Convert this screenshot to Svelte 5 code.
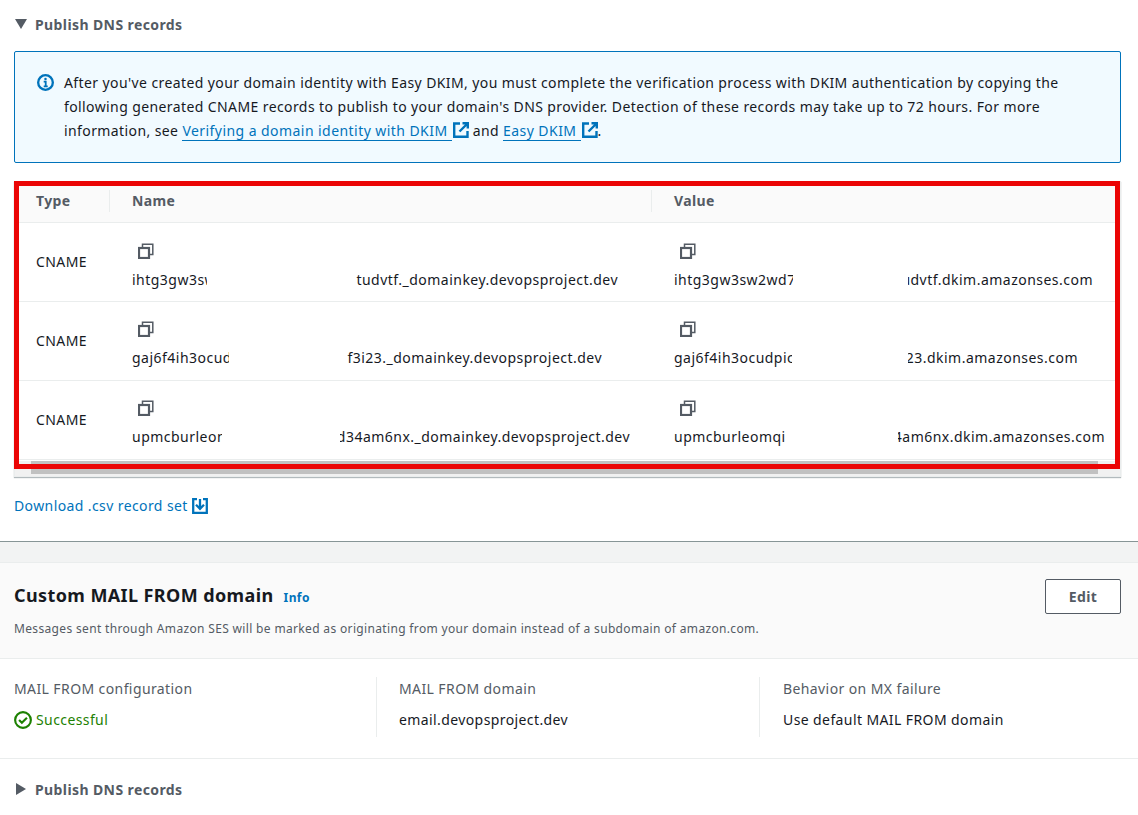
<script>
  // [start text, start clip, blanked gap, end text, end clip]
  const rows = [
    {
      name: ["ihtg3gw3sw2wd7", 75, 149, "tudvtf._domainkey.devopsproject.dev", 262],
      value: ["ihtg3gw3sw2wd7", 119, 115, "tudvtf.dkim.amazonses.com", 185],
    },
    {
      name: ["gaj6f4ih3ocudpic", 97, 118, "f3i23._domainkey.devopsproject.dev", 255],
      value: ["gaj6f4ih3ocudpic", 118, 116, "f3i23.dkim.amazonses.com", 170],
    },
    {
      name: ["upmcburleomqi", 90, 118, "d34am6nx._domainkey.devopsproject.dev", 290],
      value: ["upmcburleomqi", 112, 112, "d34am6nx.dkim.amazonses.com", 207],
    },
  ];

  const details = [
    { label: "MAIL FROM domain", text: "email.devopsproject.dev" },
    { label: "Behavior on MX failure", text: "Use default MAIL FROM domain" },
  ];
</script>

{#snippet copyIcon()}
  <svg class="copy" viewBox="0 0 16 16" width="16" height="16" fill="none" stroke="#545b64">
    <rect x="1" y="5" width="10" height="10" stroke-width="2.2" />
    <path d="M4.5 4V1.2h10.3v10.3H12" stroke-width="1.5" />
  </svg>
{/snippet}

{#snippet extIcon()}
  <svg class="ext" viewBox="0 0 16 16" width="16" height="16" fill="none" stroke="#0073bb" stroke-width="2.4">
    <path d="M7 1.5H1.2v13.3h13.3V9" />
    <path d="M9.5 1.2h5.3v5.3M14.5 1.5L6.5 9.5" />
  </svg>
{/snippet}

{#snippet redacted(parts)}
  <div class="redacted">
    <span class="clip" style="width:{parts[1]}px">{parts[0]}</span>
    <span class="gap" style="width:{parts[2]}px"></span>
    <span class="clip tail" style="width:{parts[4]}px"><span>{parts[3]}</span></span>
  </div>
{/snippet}

<div class="page">
  <section class="publish">
    <div class="expander">
      <svg viewBox="0 0 12 10" width="12" height="10"><path d="M0 0h12L6 10z" fill="#545b64" /></svg>
      <span>Publish DNS records</span>
    </div>

    <div class="alert">
      <svg class="info" viewBox="0 0 16 16" width="17" height="17" fill="none">
        <circle cx="8" cy="8" r="6.9" stroke="#0073bb" stroke-width="2.2" />
        <path d="M6.3 7.2H8.2v4M6.3 11.6h3.8" stroke="#0073bb" stroke-width="1.7" />
        <circle cx="8" cy="4.7" r="1.2" fill="#0073bb" />
      </svg>
      <p>
        After you've created your domain identity with Easy DKIM, you must complete the verification process with DKIM authentication by copying the following generated CNAME records to publish to your domain's DNS provider. Detection of these records may take up to 72 hours. For more information, see <a href="#verify">Verifying a domain identity with DKIM&nbsp;</a>{@render extIcon()} and <a href="#dkim">Easy DKIM&nbsp;</a>{@render extIcon()}.
      </p>
    </div>

    <div class="table-box">
      <div class="table-head">
        <div class="th type">Type</div>
        <div class="th name">Name</div>
        <div class="th">Value</div>
      </div>
      {#each rows as row}
        <div class="row">
          <div class="cell-type">CNAME</div>
          <div class="cell-name">
            {@render copyIcon()}
            {@render redacted(row.name)}
          </div>
          <div class="cell-value">
            {@render copyIcon()}
            {@render redacted(row.value)}
          </div>
        </div>
      {/each}
      <div class="scrollbar"><div class="thumb"></div></div>
      <div class="highlight"></div>
    </div>

    <a class="download" href="#csv">
      Download .csv record set
      <svg viewBox="0 0 16 16" width="16" height="16" fill="none" stroke="#0073bb" stroke-width="2.3">
        <path d="M5 1.2H1.2v13.6h13.6V1.2H11" />
        <path d="M8 1v9.5M4 6.8L8 10.8l4-4" />
      </svg>
    </a>
  </section>

  <div class="band"></div>

  <section class="card">
    <header class="card-head">
      <div class="card-text">
        <div class="title-line">
          <h2>Custom MAIL FROM domain</h2>
          <a class="info-link" href="#info">Info</a>
        </div>
        <p>Messages sent through Amazon SES will be marked as originating from your domain instead of a subdomain of amazon.com.</p>
      </div>
      <button>Edit</button>
    </header>

    <div class="columns">
      <div class="col">
        <div class="label">MAIL FROM configuration</div>
        <div class="status">
          <svg viewBox="0 0 16 16" width="18" height="18" fill="none" stroke="#1d8102" stroke-width="1.9">
            <circle cx="8" cy="8" r="7" />
            <path d="M4.5 8l2.5 2.5 4.5-4.5" />
          </svg>
          Successful
        </div>
      </div>
      {#each details as item}
        <div class="col">
          <div class="label">{item.label}</div>
          <div class="value">{item.text}</div>
        </div>
      {/each}
    </div>

    <div class="expander closed">
      <svg viewBox="0 0 10 12" width="10" height="12"><path d="M0 0l10 6-10 6z" fill="#545b64" /></svg>
      <span>Publish DNS records</span>
    </div>
  </section>
</div>

<style>
  :global(body) {
    margin: 0;
    background: #fff;
  }

  .page {
    width: 1138px;
    height: 815px;
    overflow: hidden;
    font-family: "Noto Sans", "Open Sans", sans-serif;
    font-size: 14px;
    letter-spacing: 0.4px;
    color: #16191f;
  }

  .publish {
    height: 541px;
    padding: 0 17px 0 14px;
    box-sizing: border-box;
  }

  .expander {
    display: flex;
    align-items: center;
    gap: 8px;
    height: 51px;
    padding-bottom: 3px;
    box-sizing: border-box;
    font-weight: 700;
    color: #545b64;
  }

  .expander svg {
    margin-left: 1px;
  }

  .alert {
    display: flex;
    gap: 10px;
    height: 112px;
    box-sizing: border-box;
    padding: 19px 20px 0 22px;
    background: #f1faff;
    border: 1px solid #0073bb;
    border-radius: 2px;
  }

  .alert .info {
    flex: none;
    margin-top: 3px;
  }

  .alert p {
    margin: 0;
    line-height: 24px;
  }

  .alert a {
    color: #0073bb;
    text-decoration: none;
    border-bottom: 1px solid #0073bb;
    letter-spacing: 0.44px;
  }

  .ext {
    vertical-align: -2px;
    margin: 0 0 0 1px;
  }

  .table-box {
    position: relative;
    margin-top: 18px;
    height: 296px;
    border: 1px solid #eaeded;
    box-shadow: 0 1px 1px rgba(0, 28, 36, 0.3);
    box-sizing: border-box;
  }

  .table-head {
    display: flex;
    align-items: center;
    height: 38px;
    padding-bottom: 2px;
    background: #fafafa;
    border-bottom: 1px solid #eaeded;
    color: #545b64;
    font-weight: 700;
  }

  .th {
    padding-left: 22px;
    line-height: 22px;
  }

  .th.type {
    width: 95px;
    padding-left: 21px;
    box-sizing: border-box;
    border-right: 1px solid #eaeded;
  }

  .th.name {
    width: 542px;
    box-sizing: border-box;
    border-right: 1px solid #eaeded;
  }

  .row {
    display: flex;
    height: 78px;
    border-bottom: 1px solid #eaeded;
  }

  .cell-type {
    width: 117px;
    padding-left: 21px;
    box-sizing: border-box;
    line-height: 78px;
  }

  .cell-name,
  .cell-value {
    padding-top: 20px;
  }

  .cell-name {
    width: 542px;
  }

  .cell-value {
    flex: 1;
  }

  .row + .row .cell-name,
  .row + .row .cell-value {
    padding-top: 19px;
  }

  .copy {
    display: block;
    margin: 0 0 11px 6px;
  }

  .redacted {
    display: flex;
    line-height: 20px;
    letter-spacing: 0.48px;
  }

  .clip {
    display: block;
    overflow: hidden;
    white-space: nowrap;
    flex: none;
  }

  .tail {
    display: flex;
    justify-content: flex-end;
  }

  .tail span {
    flex: none;
  }

  .scrollbar {
    position: absolute;
    left: 0;
    right: 0;
    bottom: 0;
    height: 15px;
    background: #f1f1f1;
  }

  .thumb {
    margin: 0 22px 0 16px;
    height: 13px;
    background: #c1c1c1;
  }

  .highlight {
    position: absolute;
    left: -1px;
    top: -1px;
    width: 1106px;
    height: 288px;
    border: 5px solid #eb0505;
    box-sizing: border-box;
  }

  .download {
    display: inline-flex;
    align-items: center;
    gap: 4px;
    margin-top: 19px;
    line-height: 20px;
    color: #0073bb;
    text-decoration: none;
  }

  .band {
    height: 21px;
    box-sizing: border-box;
    background: #f2f3f3;
    border-top: 1px solid #879596;
  }

  .card {
    border-top: 1px solid #eaeded;
  }

  .card-head {
    display: flex;
    justify-content: space-between;
    height: 78px;
    padding: 17px 17px 0 14px;
    background: #fafafa;
    border-bottom: 1px solid #eaeded;
  }

  .title-line {
    display: flex;
    align-items: baseline;
    gap: 10px;
    margin-top: 1px;
  }

  h2 {
    margin: 0;
    font-size: 18px;
    line-height: 28px;
    font-weight: 700;
    color: #16191f;
  }

  .info-link {
    font-size: 12px;
    font-weight: 700;
    color: #0073bb;
    text-decoration: none;
  }

  .card-text p {
    margin: 12px 0 0;
    font-size: 12px;
    line-height: 16px;
    letter-spacing: 0.34px;
    color: #545b64;
  }

  button {
    width: 76px;
    height: 35px;
    margin: -1px 0 0;
    border: 1px solid #545b64;
    border-radius: 2px;
    background: #fff;
    color: #545b64;
    font: inherit;
    font-weight: 700;
    letter-spacing: inherit;
  }

  .columns {
    display: grid;
    grid-template-columns: 362px 383px 1fr;
    margin-top: 18px;
    height: 81px;
    padding: 0 14px;
    border-bottom: 1px solid #eaeded;
  }

  .col {
    height: 60px;
    padding-left: 22px;
    border-left: 1px solid #eaeded;
  }

  .col:first-child {
    padding-left: 0;
    border-left: 0;
  }

  .col:last-child {
    padding-left: 23px;
  }

  .label {
    line-height: 24px;
    color: #545b64;
  }

  .status {
    display: flex;
    align-items: center;
    gap: 4px;
    margin-top: 7px;
    line-height: 24px;
    color: #1d8102;
  }

  .value {
    margin-top: 7px;
    line-height: 24px;
  }

  .expander.closed {
    height: 60px;
    padding-bottom: 0;
    padding-left: 15px;
    gap: 9px;
  }
</style>
